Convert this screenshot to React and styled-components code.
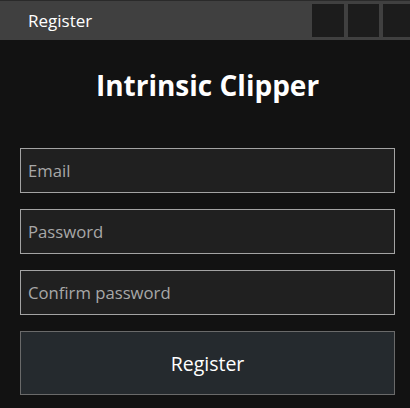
import styled, { createGlobalStyle } from "styled-components";

const GlobalStyle = createGlobalStyle`
  html, body {
    margin: 0;
    background: #121212;
    font-family: "Open Sans", "Noto Sans", sans-serif;
  }
`;

const TitleBar = styled.div`
  display: flex;
  align-items: center;
  height: 39px;
  border-top: 1px solid #2a2a2a;
  background: #404040;
  color: #ffffff;
`;

const BarTitle = styled.div`
  flex: 1;
  padding-left: 28px;
  font-size: 17px;
`;

const Controls = styled.div`
  display: flex;
  gap: 4px;
  align-self: stretch;
  padding: 3px 0 3px;
  margin-right: -4px;
`;

const ControlBox = styled.div`
  width: ${(p) => p.$w}px;
  background: #1c1c1c;
`;

const Content = styled.div`
  display: flex;
  flex-direction: column;
  gap: 16px;
  padding: 0 15px 0 20px;
`;

const Heading = styled.h1`
  margin: 24px 0 42px;
  text-align: center;
  font-size: 28px;
  font-weight: 700;
  line-height: 42px;
  color: #ffffff;
  padding-left: 5px;
`;

const Field = styled.input`
  box-sizing: border-box;
  height: 45px;
  width: 100%;
  padding: 0 7px;
  border: 1px solid #a3a3a3;
  background: #202020;
  color: #ffffff;
  font-family: inherit;
  font-size: 16.7px;
  outline: none;

  &::placeholder {
    color: #a8a8a8;
  }
`;

const SubmitButton = styled.button`
  box-sizing: border-box;
  height: 64px;
  width: 100%;
  border: 1px solid #6a6a6a;
  background: #252a2e;
  color: #ffffff;
  font-family: inherit;
  font-size: 19.5px;
`;

export default function App() {
  return (
    <>
      <GlobalStyle />
      <TitleBar>
        <BarTitle>Register</BarTitle>
        <Controls>
          <ControlBox $w={32} />
          <ControlBox $w={31} />
          <ControlBox $w={31} />
        </Controls>
      </TitleBar>
      <Heading>Intrinsic Clipper</Heading>
      <Content>
        <Field type="email" placeholder="Email" />
        <Field type="password" placeholder="Password" />
        <Field type="password" placeholder="Confirm password" />
        <SubmitButton>Register</SubmitButton>
      </Content>
    </>
  );
}
